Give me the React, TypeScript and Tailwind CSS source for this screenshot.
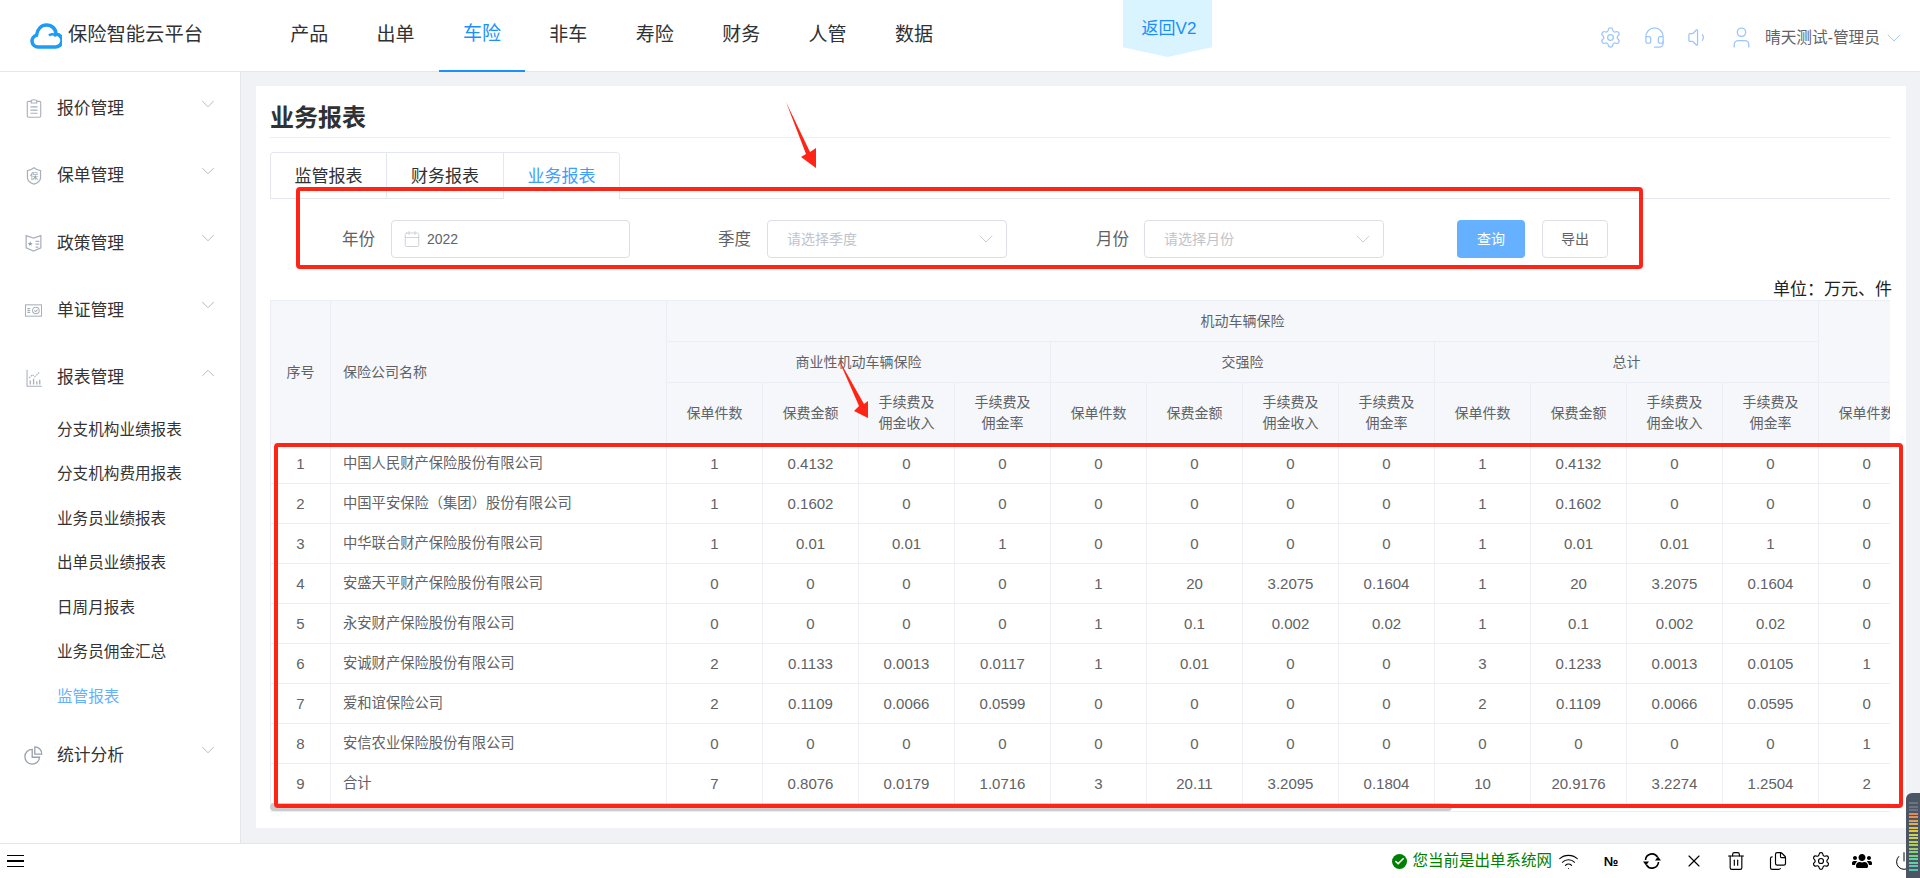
import { Calendar, Check, ChevronDown, ChevronUp, Files, Headset, Power, Settings, Trash2, User, Volume1, Wifi, X } from "lucide-react";
import { FaUsers } from "react-icons/fa";
import type { ReactNode } from "react";

const navItems = ["产品", "出单", "车险", "非车", "寿险", "财务", "人管", "数据"];
const subMenus = ["分支机构业绩报表", "分支机构费用报表", "业务员业绩报表", "出单员业绩报表", "日周月报表", "业务员佣金汇总", "监管报表"];

const rows: [string, (string | number)[]][] = [
  ["中国人民财产保险股份有限公司", [1, "0.4132", 0, 0, 0, 0, 0, 0, 1, "0.4132", 0, 0, 0]],
  ["中国平安保险（集团）股份有限公司", [1, "0.1602", 0, 0, 0, 0, 0, 0, 1, "0.1602", 0, 0, 0]],
  ["中华联合财产保险股份有限公司", [1, "0.01", "0.01", 1, 0, 0, 0, 0, 1, "0.01", "0.01", 1, 0]],
  ["安盛天平财产保险股份有限公司", [0, 0, 0, 0, 1, 20, "3.2075", "0.1604", 1, 20, "3.2075", "0.1604", 0]],
  ["永安财产保险股份有限公司", [0, 0, 0, 0, 1, "0.1", "0.002", "0.02", 1, "0.1", "0.002", "0.02", 0]],
  ["安诚财产保险股份有限公司", [2, "0.1133", "0.0013", "0.0117", 1, "0.01", 0, 0, 3, "0.1233", "0.0013", "0.0105", 1]],
  ["爱和谊保险公司", [2, "0.1109", "0.0066", "0.0599", 0, 0, 0, 0, 2, "0.1109", "0.0066", "0.0595", 0]],
  ["安信农业保险股份有限公司", [0, 0, 0, 0, 0, 0, 0, 0, 0, 0, 0, 0, 1]],
  ["合计", [7, "0.8076", "0.0179", "1.0716", 3, "20.11", "3.2095", "0.1804", 10, "20.9176", "3.2274", "1.2504", 2]],
];

const meterColors = ["#6b7280", "#6b7280", "#6b7280", "#e08a5c", "#e0905c", "#e0a050", "#dcb050", "#d8c048", "#d8c848", "#d4d048", "#c8d050", "#b8d058", "#a8d060", "#98d068", "#88d078", "#78d088", "#68d098", "#60d0a8", "#58c8b0", "#58c0b0"];

const ClipboardIcon = () => (
  <svg width="16" height="19" viewBox="0 0 19 24" fill="none" stroke="#a9b0bb" strokeWidth="1.400">
    <path d="M6 3H2.500A1.500 1.500 0 0 0 1 4.500v17A1.500 1.500 0 0 0 2.500 23h14a1.500 1.500 0 0 0 1.500-1.500v-17A1.500 1.500 0 0 0 16.500 3H13" />
    <path d="M6 5V2.500C6 1.500 8 1 9.500 1S13 1.500 13 2.500V5z" />
    <path d="M5 10h9M5 14h9M5 18h9" />
  </svg>
);

const ShieldIcon = () => (
  <svg width="16" height="18" viewBox="0 0 18 22" fill="none" stroke="#a9b0bb" strokeWidth="1.500">
    <path d="M1 4.500C4 4.500 6.500 3 9 1c2.500 2 5 3.500 8 3.500V13c0 4-4 6.500-8 8-4-1.500-8-4-8-8z" />
    <text x="9" y="15" textAnchor="middle" fontSize="10" stroke="none" fill="#8d949f">保</text>
  </svg>
);

const BookIcon = () => (
  <svg width="17" height="18" viewBox="0 0 20 22" fill="none" stroke="#a9b0bb" strokeWidth="1.500">
    <path d="M1 2l9 3 9-3v15l-9 4-9-4z" />
    <path d="M12.500 9H17M12.500 12.500H17M12.500 16H16" />
    <path d="M6 9l.9 1.900 2 .2-1.500 1.400.4 2-1.800-1-1.800 1 .4-2L3 11.100l2-.2z" fill="#9aa1ac" stroke="none" />
  </svg>
);

const CertIcon = () => (
  <svg width="17" height="13" viewBox="0 0 18 13" fill="none" stroke="#a9b0bb" strokeWidth="1.100">
    <rect x="0.500" y="0.500" width="17" height="12" />
    <path d="M2.500 4.500h3M2.500 6.500h3M2.500 8.500h3" />
    <circle cx="11.500" cy="6.500" r="3.500" />
    <path d="M9.800 6.500l1.300 1.300 2.200-2.300" />
  </svg>
);

const ChartIcon = () => (
  <svg width="18" height="18" viewBox="0 0 19 22" fill="none" stroke="#a9b0bb" strokeWidth="1.300">
    <path d="M1 1v20h18" />
    <path d="M3.500 11l4-4 3 2.500L16 4" strokeDasharray="2 1" />
    <path d="M5 19v-5M9 19v-7M13 19v-4M16.500 19v-6" strokeWidth="1.600" />
  </svg>
);

const PieIcon = () => (
  <svg width="19" height="19" viewBox="0 0 21 22" fill="none" stroke="#9aa1ac" strokeWidth="1.500">
    <path d="M9 4a8.500 8.500 0 1 0 8.500 9H9z" />
    <path d="M12 1a8 8 0 0 1 8 8.500h-8z" />
  </svg>
);

const SyncIcon = () => (
  <svg width="20" height="20" viewBox="0 0 20 20" fill="none" stroke="#000" strokeWidth="1.600" className="ml-[22px]">
    <path d="M3.500 9a6.500 6.500 0 0 1 12-3" />
    <path d="M16.500 11a6.500 6.500 0 0 1-12 3" />
    <path d="M13 9.500h6l-3-4z" fill="#000" stroke="none" />
    <path d="M1 10.500h6l-3 4z" fill="#000" stroke="none" />
  </svg>
);

const MenuItem = ({ icon, label, open }: { icon: ReactNode; label: string; open?: boolean }) => (
  <div className="flex h-[67.250px] shrink-0 items-center">
    <div className="flex w-[57px] shrink-0 justify-center pl-[15px] pr-[5px]">{icon}</div>
    <span className="text-[16.800px] text-[#333]">{label}</span>
    <span className="ml-auto mr-[21px] -mt-[10px] text-[#a8adb5]">
      {open ? <ChevronUp size={22} strokeWidth={0.900} /> : <ChevronDown size={22} strokeWidth={0.900} />}
    </span>
  </div>
);

const Select = ({ placeholder }: { placeholder: string }) => (
  <div className="flex h-[38px] w-[240px] items-center justify-between rounded border border-[#dcdfe6] pl-[19px] pr-[8px] text-[14px] text-[#c0c4cc]">
    {placeholder}
    <ChevronDown size={24} strokeWidth={0.800} />
  </div>
);

const Th = ({ children, rowSpan, colSpan, className }: { children?: ReactNode; rowSpan?: number; colSpan?: number; className?: string }) => (
  <th rowSpan={rowSpan} colSpan={colSpan} className={`border border-[#ebeef5] bg-[#f5f7fa] text-[14px] font-normal leading-[21px] text-[#606266] ${className ?? "text-center"}`}>
    {children}
  </th>
);

const SubHeaders = () => (
  <>
    <Th>保单件数</Th>
    <Th>保费金额</Th>
    <Th>手续费及<br />佣金收入</Th>
    <Th>手续费及<br />佣金率</Th>
  </>
);

const App = () => {
  return (
    <div className="relative flex h-[878px] w-[1920px] flex-col overflow-hidden bg-white font-['Liberation_Sans','Noto_Sans_CJK_SC',sans-serif]">
      {/* top bar */}
      <header className="relative flex h-[72px] shrink-0 items-center border-b border-[#e4e6e9] bg-white">
        <div className="flex w-[262px] items-center pl-[30px]">
          <svg width="32" height="26" viewBox="0 0 32 26" fill="none" stroke="#1e9bf5" strokeWidth="3.500">
            <path d="M8 24a6 6 0 0 1-1.500-11.800C7.500 6 11.500 2 16.500 2c5.500 0 9.500 4 9.500 9a6.500 6.500 0 0 1-1 13z" />
            <path d="M19 12.500c2-2 6-1.500 7 1" strokeWidth="2.500" />
          </svg>
          <span className="ml-[6px] whitespace-nowrap text-[19.300px] text-[#303133]">保险智能云平台</span>
        </div>
        <nav className="flex h-full pl-[4px]">
          {navItems.map((item) => (
            <div
              key={item}
              className={
                item === "车险"
                  ? "flex h-[72px] w-[86.400px] items-center justify-center border-b-2 border-[#1890ff] pb-[2px] text-[19px] text-[#1890ff]"
                  : "flex h-[72px] w-[86.400px] items-center justify-center pb-[2px] text-[19px] text-[#303133]"
              }
            >
              {item}
            </div>
          ))}
        </nav>
        <div className="absolute left-[1123px] top-0 flex h-[57px] w-[89px] justify-center bg-[#d9f4ff] pl-[3px] pt-[18px] text-[17px] leading-[22px] text-[#1a8cff] [clip-path:polygon(0_0,100%_0,100%_83%,50%_100%,0_83%)]">
          返回V2
        </div>
        <div className="ml-auto flex items-center pr-[14px] pt-[4px] text-[#9cc5fb]">
          <Settings size={23} strokeWidth={1.300} />
          <Headset size={23} strokeWidth={1.300} className="ml-[21px]" />
          <Volume1 size={23} strokeWidth={1.300} className="ml-[21px]" />
          <User size={25} strokeWidth={1.300} className="ml-[19px]" />
          <span className="ml-[11px] whitespace-nowrap text-[15.700px] text-[#606266]">晴天测试-管理员</span>
          <ChevronDown size={24} strokeWidth={0.900} className="ml-[2px]" />
        </div>
      </header>

      <div className="flex min-h-0 flex-1">
        {/* side menu */}
        <aside className="flex w-[241px] shrink-0 flex-col border-r border-[#e4e6e9] bg-white pt-[3px]">
          <MenuItem icon={<ClipboardIcon />} label="报价管理" />
          <MenuItem icon={<ShieldIcon />} label="保单管理" />
          <MenuItem icon={<BookIcon />} label="政策管理" />
          <MenuItem icon={<CertIcon />} label="单证管理" />
          <MenuItem icon={<ChartIcon />} label="报表管理" open />
          <div className="-mt-[4px] flex flex-col">
            {subMenus.map((item) => (
              <div key={item} className={item === "监管报表" ? "flex h-[44.500px] items-center pl-[57px] text-[15.600px] text-[#66b1ff]" : "flex h-[44.500px] items-center pl-[57px] text-[15.600px] text-[#333]"}>
                {item}
              </div>
            ))}
          </div>
          <div className="mt-[3px]">
            <MenuItem icon={<PieIcon />} label="统计分析" />
          </div>
        </aside>

        <main className="min-w-0 flex-1 bg-[#f0f2f5] pb-[15px] pl-[15px] pr-[14px] pt-[14px]">
          <div className="h-full bg-white pl-[14px] pr-[16px]">
            <div className="flex h-[52px] items-center border-b border-[#ebeef5] pt-[12px] text-[24px] font-bold text-[#303133]">业务报表</div>

            <div className="mt-[14px] flex h-[47px] border-b border-[#e4e7ed]">
              <div className="flex h-[47px] overflow-hidden rounded-t border border-b-0 border-[#e4e7ed]">
                <div className="flex w-[115px] items-center justify-center border-b border-[#e4e7ed] pt-[2px] text-[17px] text-[#303133]">监管报表</div>
                <div className="flex w-[117px] items-center justify-center border-b border-l border-[#e4e7ed] pt-[2px] text-[17px] text-[#303133]">财务报表</div>
                <div className="flex w-[116px] items-center justify-center border-l border-[#e4e7ed] bg-white pt-[2px] text-[17px] text-[#409eff]">业务报表</div>
              </div>
            </div>

            <div className="mt-[21px] flex h-[38px] items-center text-[#606266]">
              <span className="ml-[72px] w-[49px] text-[16.500px]">年份</span>
              <div className="flex h-[38px] w-[239px] items-center rounded border border-[#dcdfe6] pl-[11px] text-[14px] text-[#606266]">
                <Calendar size={18} strokeWidth={1} className="mr-[6px] text-[#c0c4cc]" />
                2022
              </div>
              <span className="ml-[88px] w-[49px] text-[16.500px]">季度</span>
              <Select placeholder="请选择季度" />
              <span className="ml-[89px] w-[48px] text-[16.500px]">月份</span>
              <Select placeholder="请选择月份" />
              <button className="ml-[73px] h-[38px] w-[68px] rounded bg-[#66b1ff] text-[14px] text-white">查询</button>
              <button className="ml-[17px] h-[38px] w-[66px] rounded border border-[#dcdfe6] bg-white text-[14px] text-[#606266]">导出</button>
            </div>

            <div className="-mr-[2px] mt-[21px] flex h-[21px] items-center justify-end text-[17px] text-[#222]">单位：万元、件</div>

            {/* report table */}
            <div className="relative h-[512px] overflow-hidden border-b border-[#ebeef5]">
              <table className="w-[1644px] table-fixed border-collapse">
                <colgroup>
                  <col className="w-[60px]" />
                  <col className="w-[336px]" />
                  {Array.from({ length: 13 }).map((_, i) => (
                    <col key={i} className="w-[96px]" />
                  ))}
                </colgroup>
                <thead>
                  <tr className="h-[41px]">
                    <Th rowSpan={3}>序号</Th>
                    <Th rowSpan={3} className="pl-[12px] text-left">保险公司名称</Th>
                    <Th colSpan={12}>机动车辆保险</Th>
                    <Th rowSpan={2} />
                  </tr>
                  <tr className="h-[41px]">
                    <Th colSpan={4}>商业性机动车辆保险</Th>
                    <Th colSpan={4}>交强险</Th>
                    <Th colSpan={4}>总计</Th>
                  </tr>
                  <tr className="h-[61px]">
                    <SubHeaders />
                    <SubHeaders />
                    <SubHeaders />
                    <Th className="whitespace-nowrap text-center">保单件数</Th>
                  </tr>
                </thead>
                <tbody>
                  {rows.map(([name, cells], i) => (
                    <tr key={name} className="h-[40px]">
                      <td className="border border-[#ebeef5] pt-[1px] text-center text-[15px] text-[#606266]">{i + 1}</td>
                      <td className="whitespace-nowrap border border-[#ebeef5] pl-[12px] pt-[1px] text-[14.300px] text-[#606266]">{name}</td>
                      {cells.map((cell, j) => (
                        <td key={j} className="border border-[#ebeef5] pt-[1px] text-center text-[15px] text-[#606266]">{cell}</td>
                      ))}
                    </tr>
                  ))}
                </tbody>
              </table>
              <div className="absolute bottom-0 left-0 h-[8px] w-[1182px] rounded bg-[#c9cbce]" />
            </div>
          </div>
        </main>
      </div>

      {/* status bar */}
      <footer className="flex h-[35px] shrink-0 items-center border-t border-[#e4e6e9] bg-white">
        <div className="ml-[7px] flex w-[17px] flex-col gap-[4px]">
          <div className="h-[1.500px] bg-black" />
          <div className="h-[1.500px] bg-black" />
          <div className="h-[1.500px] bg-black" />
        </div>
        <div className="ml-auto flex items-center pr-[6px] text-black">
          <span className="flex h-[15px] w-[15px] items-center justify-center rounded-full bg-[#008000]">
            <Check size={11} strokeWidth={3.500} className="text-white" />
          </span>
          <span className="ml-[5px] whitespace-nowrap text-[15.500px] text-[#008000]">您当前是出单系统网</span>
          <Wifi size={21} strokeWidth={1.200} className="ml-[6px]" />
          <span className="ml-[23px] w-[18px] text-center text-[13px] font-bold leading-none">№</span>
          <SyncIcon />
          <X size={20} strokeWidth={1.400} className="ml-[22px]" />
          <Trash2 size={20} strokeWidth={1.400} className="ml-[22px]" />
          <Files size={20} strokeWidth={1.400} className="ml-[22px]" />
          <Settings size={20} strokeWidth={1.400} className="ml-[23px]" />
          <FaUsers size={20} className="ml-[21px]" />
          <Power size={20} strokeWidth={1.200} className="ml-[22px]" />
        </div>
      </footer>

      {/* annotations drawn over the screenshot */}
      <div className="absolute left-[296px] top-[187px] h-[82px] w-[1347px] rounded border-4 border-[#ff2416]" />
      <div className="absolute left-[274px] top-[443px] h-[365px] w-[1629px] rounded border-4 border-[#ff2416]" />
      <svg className="absolute left-[786px] top-[102px]" width="30" height="66" viewBox="0 0 30 66">
        <polygon points="0,0 24,50 30,46 30,66 15,55 20,52" fill="#ff2416" />
      </svg>
      <svg className="absolute left-[838px] top-[358px]" width="30" height="60" viewBox="0 0 30 60">
        <polygon points="0,0 26,46 30,43 30,60 16,53 21,48" fill="#ff2416" />
      </svg>

      {/* level meter widget */}
      <div className="absolute left-[1906px] top-[793px] flex h-[85px] w-[14px] flex-col items-center gap-[1.500px] rounded-tl-md bg-[#4b5563] pt-[9px]">
        {meterColors.map((c, i) => (
          <div key={i} className="h-[2px] w-[9px] shrink-0" style={{ backgroundColor: c }} />
        ))}
      </div>
    </div>
  );
};

export default App;
